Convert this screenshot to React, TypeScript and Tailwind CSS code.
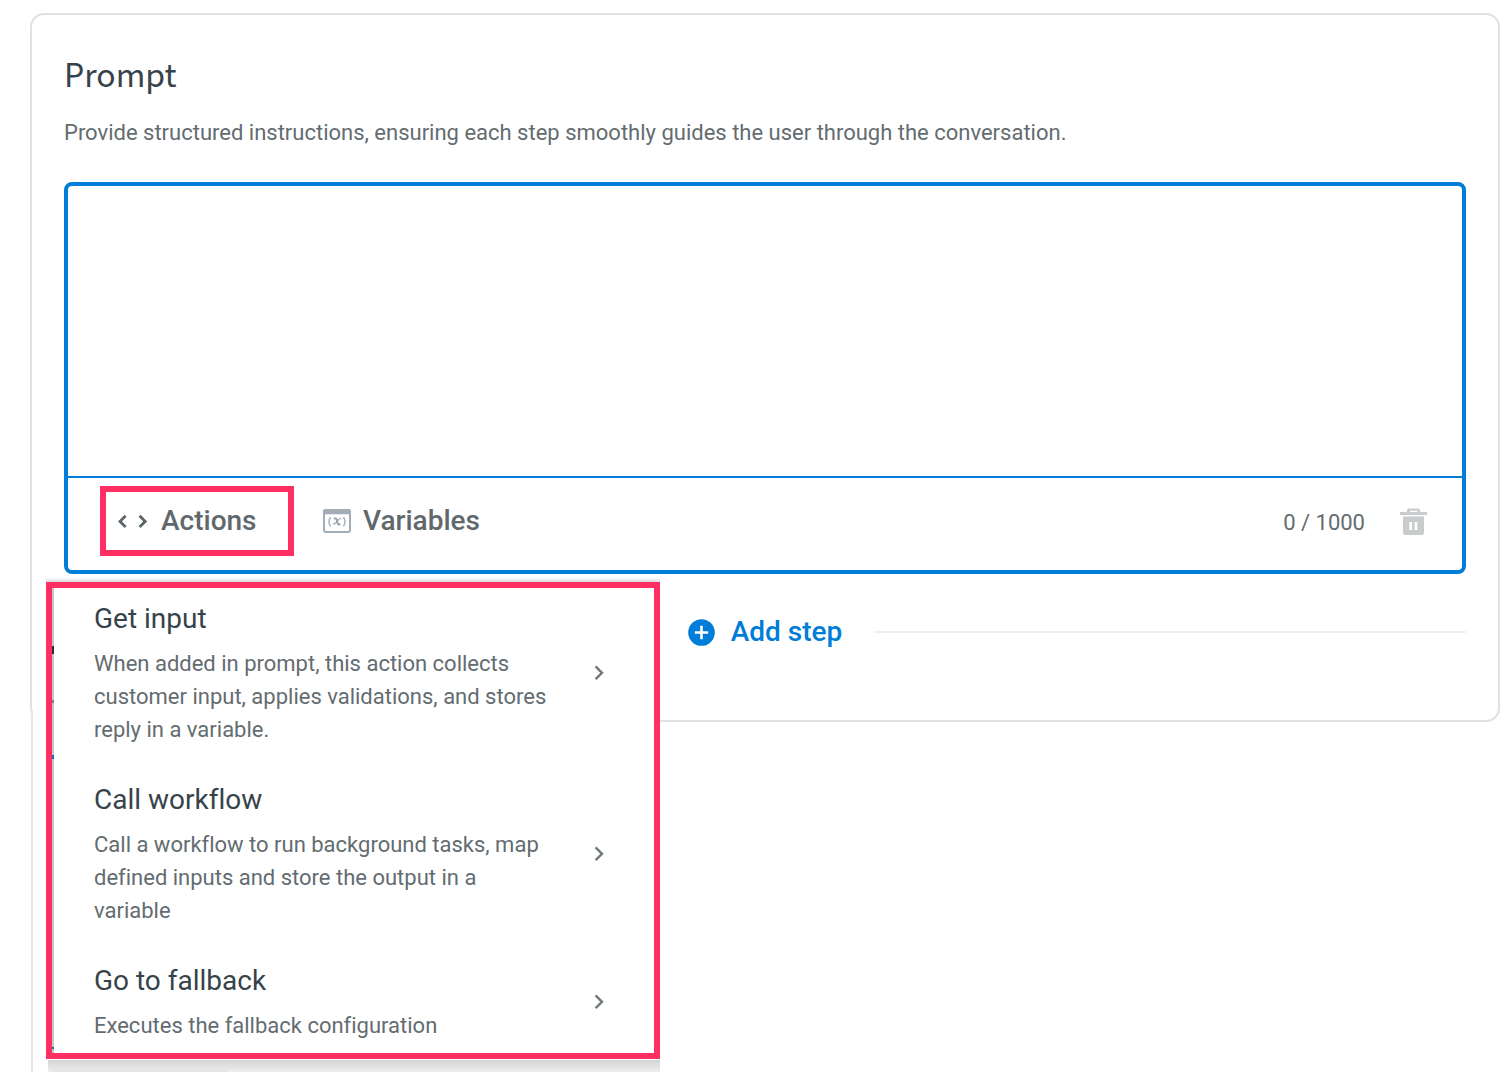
import { useState } from 'react';

const MAX_LENGTH = 1000;

const ACTIONS = [
  {
    title: 'Get input',
    text: 'When added in prompt, this action collects customer input, applies validations, and stores reply in a variable.',
  },
  {
    title: 'Call workflow',
    text: 'Call a workflow to run background tasks, map defined inputs and store the output in a variable',
  },
  {
    title: 'Go to fallback',
    text: 'Executes the fallback configuration',
  },
];

function ChevronIcon() {
  return (
    <svg width="10" height="16" viewBox="0 0 10 16" fill="none" className="shrink-0" aria-hidden="true">
      <path d="M1.6 1.4 8 7.800l-6.400 6.400" stroke="#71797d" strokeWidth="2.400" />
    </svg>
  );
}

function CodeIcon() {
  return (
    <svg width="32" height="14" viewBox="0 0 32 14" fill="none" aria-hidden="true">
      <path d="M8.600 1.800 3 7.400 8.600 13M22.600 1.800l5.600 5.600-5.600 5.600" stroke="#5a666b" strokeWidth="2.800" />
    </svg>
  );
}

function VariableIcon() {
  return (
    <svg width="28" height="24" viewBox="0 0 28 24" fill="none" aria-hidden="true">
      <rect x="1" y="1" width="26" height="22" rx="2" stroke="#a3adb7" strokeWidth="2" />
      <path d="M0 5.200V2.500A2.500 2.500 0 0 1 2.500 0h23A2.500 2.500 0 0 1 28 2.500v2.700z" fill="#a3adb7" />
      <path d="M7.600 8.200c-2.200 2.600-2.200 6.600 0 9.200M20.400 8.200c2.200 2.600 2.200 6.600 0 9.200" stroke="#a3adb7" strokeWidth="1.400" />
      <path d="M10.800 9.600c1.900-.8 2.700.1 3.100 1.700l.6 2.400c.4 1.700 1.200 2.200 2.800 1.200" stroke="#98a2ac" strokeWidth="2" />
      <path d="M18.400 9.600c-2-.5-3.100.9-4.200 2.500-1.100 1.700-2.300 3.400-4.400 2.700" stroke="#98a2ac" strokeWidth="1.200" />
    </svg>
  );
}

function TrashIcon() {
  return (
    <svg width="28" height="28" viewBox="0 0 28 28" fill="#c9cccd" aria-hidden="true">
      <path d="M7 4V2A1.500 1.500 0 0 1 8.500.5h10A1.500 1.500 0 0 1 20 2v2h7v3H0V4zM10 4h7.500V2.700H10z" fillRule="evenodd" />
      <path d="M3 8.500h21V25a2 2 0 0 1-2 2H5a2 2 0 0 1-2-2zM9.300 14v8H12v-8zm5.300 0v8h2.700v-8z" fillRule="evenodd" />
    </svg>
  );
}

function PlusIcon() {
  return (
    <svg width="27" height="27" viewBox="0 0 27 27" aria-hidden="true">
      <circle cx="13.500" cy="13.500" r="13.300" fill="#007dd8" />
      <path d="M13.500 6.800v13.400M6.800 13.500h13.400" stroke="#fff" strokeWidth="2.600" />
    </svg>
  );
}

function ActionsMenu() {
  return (
    <div className="absolute top-[582px] left-[46px] z-20 w-[614px] border-6 border-[#ff2f63] bg-white">
      <ul className="flex flex-col gap-[34px] border-l-2 border-[#c4c6c7] py-[11px] pr-[50px] pl-10">
        {ACTIONS.map((action) => (
          <li key={action.title}>
            <button type="button" className="flex w-full items-center justify-between text-left">
              <span className="block w-[458px]">
                <span className="block text-[28px] leading-10 text-[#37434a]">{action.title}</span>
                <span className="mt-2 block text-[22px] leading-[33px] text-[#636c70]">{action.text}</span>
              </span>
              <ChevronIcon />
            </button>
          </li>
        ))}
      </ul>
      <div className="absolute top-[58px] left-0 h-2 w-[2px] bg-[#2b3033]" />
      <div className="absolute top-[112px] left-0 h-[3px] w-[2px] bg-[#7f8587]" />
      <div className="absolute top-[167px] left-0 h-1 w-[2px] bg-[#0a6fbd]" />
      <div className="absolute bottom-1 left-0 h-[2px] w-[2px] bg-[#0a6fbd]" />
    </div>
  );
}

export default function App() {
  const [prompt, setPrompt] = useState('');

  return (
    <main className="relative min-h-screen overflow-hidden bg-white pt-[13px] pr-3 pl-[30px] font-['Roboto',sans-serif] [font-variant-ligatures:none]">
      <section className="rounded-[14px] border-2 border-[#e1e1e2] px-8 pt-[34px] pb-[67px]">
        <h1 className="font-['Noto_Sans_CJK_SC','Noto_Sans',sans-serif] text-[32px] leading-[48px] text-[#37434a]">
          Prompt
        </h1>
        <label htmlFor="prompt" className="mt-[19px] block text-[22px] leading-[33px] text-[#636c70]">
          Provide structured instructions, ensuring each step smoothly guides the user through the conversation.
        </label>

        <div className="mt-[33px] rounded-lg border-4 border-[#007dd8]">
          <textarea
            id="prompt"
            value={prompt}
            maxLength={MAX_LENGTH}
            onChange={(e) => setPrompt(e.target.value)}
            className="block h-[290px] w-full resize-none p-6 text-[22px] outline-none"
          />
          <div className="flex h-[94px] items-start justify-between border-t-2 border-[#007dd8] pt-2 pr-[34px] pl-8">
            <div className="flex items-center gap-[29px] text-[28px] font-medium text-[#5f696d]">
              <button
                type="button"
                className="flex h-[70px] w-[194px] items-center gap-3 border-6 border-[#ff2f63] pl-[11px]"
              >
                <CodeIcon />
                Actions
              </button>
              <button type="button" className="flex items-center gap-3">
                <VariableIcon />
                Variables
              </button>
            </div>
            <div className="flex h-[72px] items-center gap-[35px] text-[22px] text-[#636c70]">
              <span>
                {prompt.length} / {MAX_LENGTH}
              </span>
              <button type="button" aria-label="Delete step">
                <TrashIcon />
              </button>
            </div>
          </div>
        </div>

        <div className="mt-[37px] flex items-center gap-8">
          <div className="h-[2px] flex-1 bg-[#efefef]" />
          <button type="button" className="flex items-center gap-4 text-[28px] leading-[42px] font-medium text-[#007dd8]">
            <PlusIcon />
            Add step
          </button>
          <div className="h-[2px] flex-1 bg-[#efefef]" />
        </div>
      </section>

      {/* edge of the next panel, under the open menu */}
      <div className="absolute top-[710px] bottom-0 left-[31px] z-10 w-10 border-l-2 border-[#e8e8e8] bg-white" />
      <div className="absolute top-[578px] left-[46px] h-1 w-[614px] bg-linear-to-b from-[#fafafa] to-[#dcdcdc]" />
      <div className="absolute top-[1060px] left-12 z-10 h-3 w-[612px] overflow-hidden bg-linear-to-b from-[#d4d4d4] to-[#eeeeee]">
        <div className="mt-2 ml-1 h-8 w-[176px] rounded-lg bg-[#e4e4e4]" />
      </div>
      <ActionsMenu />
    </main>
  );
}
